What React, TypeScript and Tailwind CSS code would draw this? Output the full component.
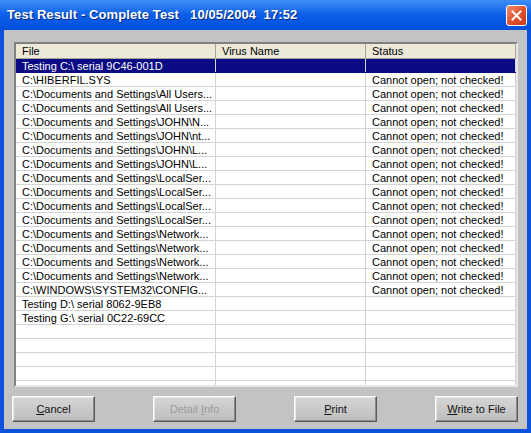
import React from 'react';

type Row = { file: string; virus?: string; status?: string; selected?: boolean };

const NOT_CHECKED = 'Cannot open; not checked!';

const rows: Row[] = [
  { file: 'Testing C:\\ serial 9C46-001D', selected: true },
  { file: 'C:\\HIBERFIL.SYS', status: NOT_CHECKED },
  { file: 'C:\\Documents and Settings\\All Users...', status: NOT_CHECKED },
  { file: 'C:\\Documents and Settings\\All Users...', status: NOT_CHECKED },
  { file: 'C:\\Documents and Settings\\JOHN\\N...', status: NOT_CHECKED },
  { file: 'C:\\Documents and Settings\\JOHN\\nt...', status: NOT_CHECKED },
  { file: 'C:\\Documents and Settings\\JOHN\\L...', status: NOT_CHECKED },
  { file: 'C:\\Documents and Settings\\JOHN\\L...', status: NOT_CHECKED },
  { file: 'C:\\Documents and Settings\\LocalSer...', status: NOT_CHECKED },
  { file: 'C:\\Documents and Settings\\LocalSer...', status: NOT_CHECKED },
  { file: 'C:\\Documents and Settings\\LocalSer...', status: NOT_CHECKED },
  { file: 'C:\\Documents and Settings\\LocalSer...', status: NOT_CHECKED },
  { file: 'C:\\Documents and Settings\\Network...', status: NOT_CHECKED },
  { file: 'C:\\Documents and Settings\\Network...', status: NOT_CHECKED },
  { file: 'C:\\Documents and Settings\\Network...', status: NOT_CHECKED },
  { file: 'C:\\Documents and Settings\\Network...', status: NOT_CHECKED },
  { file: 'C:\\WINDOWS\\SYSTEM32\\CONFIG...', status: NOT_CHECKED },
  { file: 'Testing D:\\ serial 8062-9EB8' },
  { file: 'Testing G:\\ serial 0C22-69CC' },
];

// pad the list with blank lines so the grid runs to the bottom
const allRows: Row[] = [...rows, ...Array.from({ length: 6 }, () => ({ file: '' }))];

function XpButton({ label, mnemonic, disabled }: { label: string; mnemonic: number; disabled?: boolean }) {
  const before = label.slice(0, mnemonic);
  const key = label[mnemonic];
  const after = label.slice(mnemonic + 1);
  return (
    <button
      className={`w-[83px] h-[26px] text-[11px] font-normal bg-gradient-to-b from-[#d6d6d6] to-[#bdbdbd] border border-t-white border-l-white border-r-[#5a5a5a] border-b-[#5a5a5a] shadow-[inset_-1px_-1px_0_#8a8a8a,inset_1px_1px_0_#e8e8e8] ${
        disabled ? 'text-[#9a9a9a]' : 'text-[#111]'
      }`}
    >
      {before}
      <span className="underline">{key}</span>
      {after}
    </button>
  );
}

export default function App() {
  return (
    <div
      className="w-[531px] h-[433px] flex flex-col bg-[#0a52dc] overflow-hidden"
      style={{ fontFamily: '"Liberation Sans", Arial, sans-serif' }}
    >
      {/* title bar */}
      <div className="h-[30px] shrink-0 flex items-center justify-between pl-[7px] pr-[4px] bg-gradient-to-b from-[#3d8ff7] via-[#0a5ee8] to-[#0550dc]">
        <span className="text-white font-bold text-[13px] tracking-[0.1px] [text-shadow:1px_1px_0_#0a2a80] whitespace-pre">
          Test Result - Complete Test   10/05/2004  17:52
        </span>
        <div className="w-[21px] h-[21px] rounded-[3px] border border-white bg-gradient-to-br from-[#ee8a6c] via-[#e0532c] to-[#c83c16] flex items-center justify-center">
          <svg width="11" height="11" viewBox="0 0 11 11">
            <path d="M1.5 1.5 L9.5 9.5 M9.5 1.5 L1.5 9.5" stroke="white" strokeWidth="2" strokeLinecap="square" />
          </svg>
        </div>
      </div>

      {/* dialog body */}
      <div className="flex-1 mx-[4px] mb-[4px] bg-[#c3c3c3] flex flex-col pt-[12px] pl-[10px] pr-[9px]">
        <div className="h-[345px] border-2 border-t-[#808080] border-l-[#808080] border-r-[#e6e6e6] border-b-[#e6e6e6] bg-white overflow-hidden text-[11px] leading-[14px]">
          <div className="flex h-[15px] bg-[#ece9d8] text-black">
            <div className="w-[200px] pl-[6px] border-r border-[#a8a598] border-b">File</div>
            <div className="w-[150px] pl-[6px] border-r border-[#a8a598] border-b">Virus Name</div>
            <div className="w-[150px] pl-[6px] border-r border-[#a8a598] border-b">Status</div>
          </div>
          {allRows.map((r, i) => (
            <div
              key={i}
              className={`flex h-[14px] border-b ${r.selected ? 'bg-[#0a0a84] text-white border-[#0a0a84]' : 'text-black border-[#d4d4d4]'}`}
            >
              <div className="w-[200px] pl-[6px] border-r border-[#d4d4d4] whitespace-nowrap overflow-hidden">{r.file}</div>
              <div className="w-[150px] pl-[6px] border-r border-[#d4d4d4]">{r.virus}</div>
              <div className="w-[150px] pl-[6px] border-r border-[#d4d4d4] whitespace-nowrap">{r.status}</div>
            </div>
          ))}
        </div>

        <div className="flex justify-between mt-[9px] -ml-[2px]">
          <XpButton label="Cancel" mnemonic={0} />
          <XpButton label="Detail Info" mnemonic={7} disabled />
          <XpButton label="Print" mnemonic={0} />
          <XpButton label="Write to File" mnemonic={0} />
        </div>
      </div>
    </div>
  );
}
